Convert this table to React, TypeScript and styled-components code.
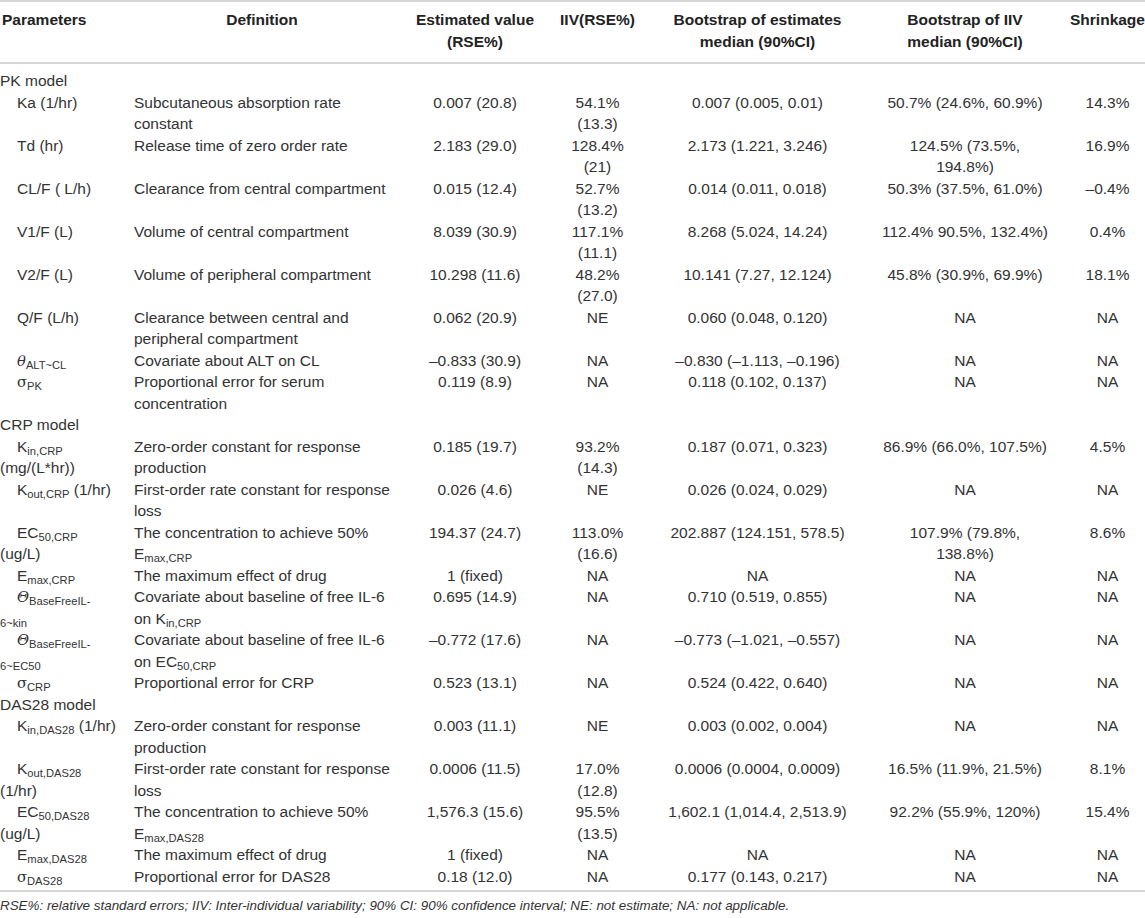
import React from 'react';
import styled, { createGlobalStyle } from 'styled-components';

const GlobalStyle = createGlobalStyle`
  html, body {
    margin: 0;
    padding: 0;
    background: #ffffff;
  }
  body {
    font-family: "Liberation Sans", Arial, Helvetica, sans-serif;
    color: #333333;
    overflow: hidden;
  }
`;

const Page = styled.div`
  width: 1145px;
  overflow: hidden;
  font-size: 15.5px;
  line-height: 21.5px;
`;

const COLUMNS = '132px 260px 158px 95px 225px 190px 1fr';

const HeaderRow = styled.div`
  display: grid;
  grid-template-columns: ${COLUMNS};
  border-top: 2px solid #d6d6d6;
  border-bottom: 2px solid #d6d6d6;
  padding: 7px 0 10px;
  color: #222222;
  font-weight: 700;
`;

const HeadCell = styled.div<{ $align?: 'left' | 'center'; $pad?: number }>`
  text-align: ${(p) => p.$align ?? 'center'};
  padding-left: ${(p) => p.$pad ?? 0}px;
  white-space: nowrap;
`;

const Body = styled.div`
  padding: 6px 0 3px;
  border-bottom: 2px solid #d6d6d6;
`;

const SectionRow = styled.div`
  padding-left: 0;
`;

const DataRow = styled.div`
  display: grid;
  grid-template-columns: ${COLUMNS};
`;

const ParamCell = styled.div`
  text-indent: 17px;
  white-space: nowrap;
`;

const DefCell = styled.div`
  padding-left: 2px;
  white-space: nowrap;
`;

const ValueCell = styled.div<{ $pad?: number }>`
  text-align: center;
  padding-left: ${(p) => p.$pad ?? 0}px;
  white-space: nowrap;
`;

const Sub = styled.sub`
  font-size: 0.72em;
  vertical-align: -0.3em;
  line-height: 0;
`;

const Greek = styled.span<{ $italic?: boolean }>`
  font-family: "DejaVu Serif", "Liberation Serif", serif;
  font-style: ${(p) => (p.$italic ? 'italic' : 'normal')};
  font-size: 0.95em;
  line-height: 0;
`;

const Footer = styled.p`
  margin: 3px 0 0;
  font-size: 13.4px;
  line-height: 21px;
  font-style: italic;
  color: #333333;
`;

type Cell = React.ReactNode | React.ReactNode[];

interface Row {
  param: Cell;
  def: Cell;
  est: string;
  iiv: Cell;
  boot: string;
  bootIiv: Cell;
  shrink: string;
}

interface Section {
  title: string;
  rows: Row[];
}

const sections: Section[] = [
  {
    title: 'PK model',
    rows: [
      {
        param: 'Ka (1/hr)',
        def: ['Subcutaneous absorption rate', 'constant'],
        est: '0.007 (20.8)',
        iiv: ['54.1%', '(13.3)'],
        boot: '0.007 (0.005, 0.01)',
        bootIiv: '50.7% (24.6%, 60.9%)',
        shrink: '14.3%',
      },
      {
        param: 'Td (hr)',
        def: ['Release time of zero order rate', ''],
        est: '2.183 (29.0)',
        iiv: ['128.4%', '(21)'],
        boot: '2.173 (1.221, 3.246)',
        bootIiv: ['124.5% (73.5%,', '194.8%)'],
        shrink: '16.9%',
      },
      {
        param: 'CL/F ( L/h)',
        def: 'Clearance from central compartment',
        est: '0.015 (12.4)',
        iiv: ['52.7%', '(13.2)'],
        boot: '0.014 (0.011, 0.018)',
        bootIiv: '50.3% (37.5%, 61.0%)',
        shrink: '–0.4%',
      },
      {
        param: 'V1/F (L)',
        def: 'Volume of central compartment',
        est: '8.039 (30.9)',
        iiv: ['117.1%', '(11.1)'],
        boot: '8.268 (5.024, 14.24)',
        bootIiv: '112.4% 90.5%, 132.4%)',
        shrink: '0.4%',
      },
      {
        param: 'V2/F (L)',
        def: 'Volume of peripheral compartment',
        est: '10.298 (11.6)',
        iiv: ['48.2%', '(27.0)'],
        boot: '10.141 (7.27, 12.124)',
        bootIiv: '45.8% (30.9%, 69.9%)',
        shrink: '18.1%',
      },
      {
        param: 'Q/F (L/h)',
        def: ['Clearance between central and', 'peripheral compartment'],
        est: '0.062 (20.9)',
        iiv: 'NE',
        boot: '0.060 (0.048, 0.120)',
        bootIiv: 'NA',
        shrink: 'NA',
      },
      {
        param: (
          <>
            <Greek $italic>θ</Greek>
            <Sub>ALT~CL</Sub>
          </>
        ),
        def: 'Covariate about ALT on CL',
        est: '–0.833 (30.9)',
        iiv: 'NA',
        boot: '–0.830 (–1.113, –0.196)',
        bootIiv: 'NA',
        shrink: 'NA',
      },
      {
        param: (
          <>
            <Greek>σ</Greek>
            <Sub>PK</Sub>
          </>
        ),
        def: ['Proportional error for serum', 'concentration'],
        est: '0.119 (8.9)',
        iiv: 'NA',
        boot: '0.118 (0.102, 0.137)',
        bootIiv: 'NA',
        shrink: 'NA',
      },
    ],
  },
  {
    title: 'CRP model',
    rows: [
      {
        param: [
          <>
            K<Sub>in,CRP</Sub>
          </>,
          '(mg/(L*hr))',
        ],
        def: ['Zero-order constant for response', 'production'],
        est: '0.185 (19.7)',
        iiv: ['93.2%', '(14.3)'],
        boot: '0.187 (0.071, 0.323)',
        bootIiv: '86.9% (66.0%, 107.5%)',
        shrink: '4.5%',
      },
      {
        param: (
          <>
            K<Sub>out,CRP</Sub> (1/hr)
          </>
        ),
        def: ['First-order rate constant for response', 'loss'],
        est: '0.026 (4.6)',
        iiv: 'NE',
        boot: '0.026 (0.024, 0.029)',
        bootIiv: 'NA',
        shrink: 'NA',
      },
      {
        param: [
          <>
            EC<Sub>50,CRP</Sub>
          </>,
          '(ug/L)',
        ],
        def: [
          'The concentration to achieve 50%',
          <>
            E<Sub>max,CRP</Sub>
          </>,
        ],
        est: '194.37 (24.7)',
        iiv: ['113.0%', '(16.6)'],
        boot: '202.887 (124.151, 578.5)',
        bootIiv: ['107.9% (79.8%,', '138.8%)'],
        shrink: '8.6%',
      },
      {
        param: (
          <>
            E<Sub>max,CRP</Sub>
          </>
        ),
        def: 'The maximum effect of drug',
        est: '1 (fixed)',
        iiv: 'NA',
        boot: 'NA',
        bootIiv: 'NA',
        shrink: 'NA',
      },
      {
        param: [
          <>
            <Greek $italic>Θ</Greek>
            <Sub>BaseFreeIL-</Sub>
          </>,
          <Sub>6~kin</Sub>,
        ],
        def: [
          'Covariate about baseline of free IL-6',
          <>
            on K<Sub>in,CRP</Sub>
          </>,
        ],
        est: '0.695 (14.9)',
        iiv: 'NA',
        boot: '0.710 (0.519, 0.855)',
        bootIiv: 'NA',
        shrink: 'NA',
      },
      {
        param: [
          <>
            <Greek $italic>Θ</Greek>
            <Sub>BaseFreeIL-</Sub>
          </>,
          <Sub>6~EC50</Sub>,
        ],
        def: [
          'Covariate about baseline of free IL-6',
          <>
            on EC<Sub>50,CRP</Sub>
          </>,
        ],
        est: '–0.772 (17.6)',
        iiv: 'NA',
        boot: '–0.773 (–1.021, –0.557)',
        bootIiv: 'NA',
        shrink: 'NA',
      },
      {
        param: (
          <>
            <Greek>σ</Greek>
            <Sub>CRP</Sub>
          </>
        ),
        def: 'Proportional error for CRP',
        est: '0.523 (13.1)',
        iiv: 'NA',
        boot: '0.524 (0.422, 0.640)',
        bootIiv: 'NA',
        shrink: 'NA',
      },
    ],
  },
  {
    title: 'DAS28 model',
    rows: [
      {
        param: (
          <>
            K<Sub>in,DAS28</Sub> (1/hr)
          </>
        ),
        def: ['Zero-order constant for response', 'production'],
        est: '0.003 (11.1)',
        iiv: 'NE',
        boot: '0.003 (0.002, 0.004)',
        bootIiv: 'NA',
        shrink: 'NA',
      },
      {
        param: [
          <>
            K<Sub>out,DAS28</Sub>
          </>,
          '(1/hr)',
        ],
        def: ['First-order rate constant for response', 'loss'],
        est: '0.0006 (11.5)',
        iiv: ['17.0%', '(12.8)'],
        boot: '0.0006 (0.0004, 0.0009)',
        bootIiv: '16.5% (11.9%, 21.5%)',
        shrink: '8.1%',
      },
      {
        param: [
          <>
            EC<Sub>50,DAS28</Sub>
          </>,
          '(ug/L)',
        ],
        def: [
          'The concentration to achieve 50%',
          <>
            E<Sub>max,DAS28</Sub>
          </>,
        ],
        est: '1,576.3 (15.6)',
        iiv: ['95.5%', '(13.5)'],
        boot: '1,602.1 (1,014.4, 2,513.9)',
        bootIiv: '92.2% (55.9%, 120%)',
        shrink: '15.4%',
      },
      {
        param: (
          <>
            E<Sub>max,DAS28</Sub>
          </>
        ),
        def: 'The maximum effect of drug',
        est: '1 (fixed)',
        iiv: 'NA',
        boot: 'NA',
        bootIiv: 'NA',
        shrink: 'NA',
      },
      {
        param: (
          <>
            <Greek>σ</Greek>
            <Sub>DAS28</Sub>
          </>
        ),
        def: 'Proportional error for DAS28',
        est: '0.18 (12.0)',
        iiv: 'NA',
        boot: '0.177 (0.143, 0.217)',
        bootIiv: 'NA',
        shrink: 'NA',
      },
    ],
  },
];

function Lines({ value }: { value: Cell }) {
  if (Array.isArray(value)) {
    return (
      <>
        {value.map((line, i) => (
          <React.Fragment key={i}>
            {i > 0 && <br />}
            {line}
          </React.Fragment>
        ))}
      </>
    );
  }
  return <>{value}</>;
}

function App() {
  return (
    <Page>
      <GlobalStyle />
      <HeaderRow>
        <HeadCell $align="left" $pad={2}>Parameters</HeadCell>
        <HeadCell>Definition</HeadCell>
        <HeadCell $pad={8}>
          Estimated value
          <br />
          (RSE%)
        </HeadCell>
        <HeadCell>IIV(RSE%)</HeadCell>
        <HeadCell>
          Bootstrap of estimates
          <br />
          median (90%CI)
        </HeadCell>
        <HeadCell>
          Bootstrap of IIV
          <br />
          median (90%CI)
        </HeadCell>
        <HeadCell $pad={10}>Shrinkage</HeadCell>
      </HeaderRow>
      <Body>
        {sections.map((section) => (
          <React.Fragment key={section.title}>
            <SectionRow>{section.title}</SectionRow>
            {section.rows.map((row, i) => (
              <DataRow key={i}>
                <ParamCell>
                  <Lines value={row.param} />
                </ParamCell>
                <DefCell>
                  <Lines value={row.def} />
                </DefCell>
                <ValueCell $pad={8}>{row.est}</ValueCell>
                <ValueCell>
                  <Lines value={row.iiv} />
                </ValueCell>
                <ValueCell>{row.boot}</ValueCell>
                <ValueCell>
                  <Lines value={row.bootIiv} />
                </ValueCell>
                <ValueCell $pad={10}>{row.shrink}</ValueCell>
              </DataRow>
            ))}
          </React.Fragment>
        ))}
      </Body>
      <Footer>
        RSE%: relative standard errors; IIV: Inter-individual variability; 90% CI: 90% confidence
        interval; NE: not estimate; NA: not applicable.
      </Footer>
    </Page>
  );
}

export default App;
